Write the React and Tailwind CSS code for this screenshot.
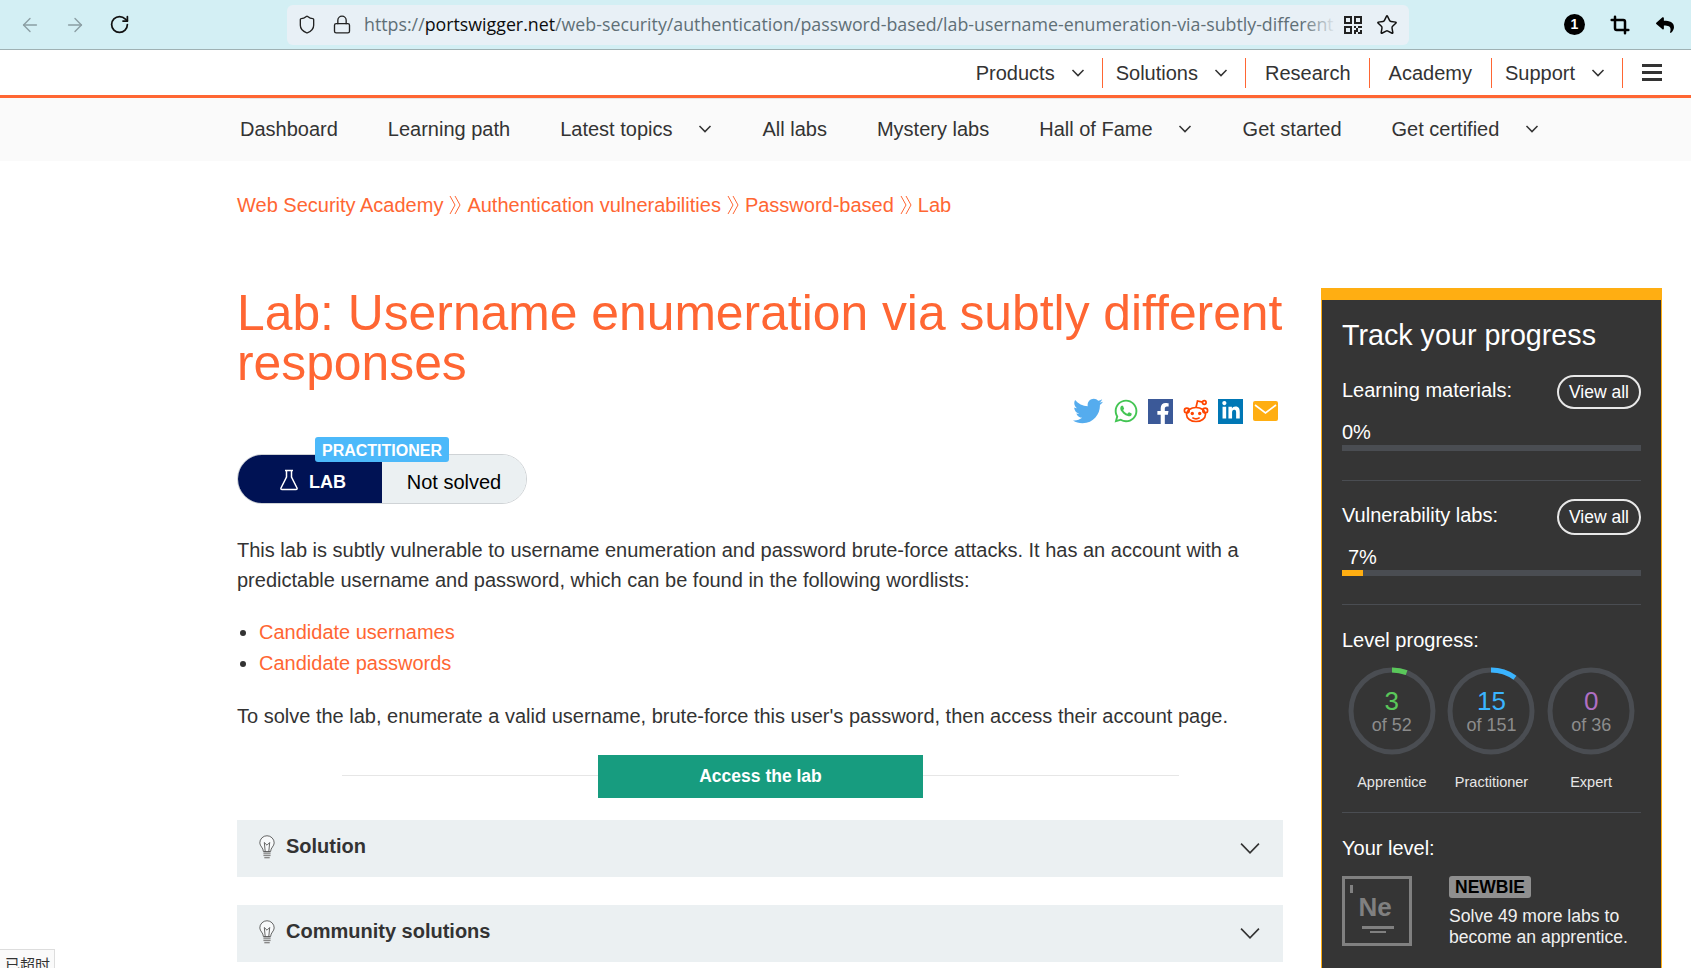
import React from "react";
import { ArrowLeft, ArrowRight, RotateCw, Shield, Lock, Star, Crop } from "lucide-react";
import { FaTwitter, FaWhatsapp, FaFacebookF, FaLinkedinIn, FaReply } from "react-icons/fa";

const Chev = ({ cls = "w-[14px] h-[8px]", sw = "1.5" }) => (
  <svg viewBox="0 0 14 8" className={cls} fill="none" stroke="#333" strokeWidth={sw}><path d="M1.5 1 L7 6.6 L12.5 1" /></svg>
);

const Crumb = () => (
  <svg viewBox="0 0 12 20" className="w-[12px] h-[20px] mx-[6px]" fill="none" stroke="#ff6633" strokeWidth="1"><path d="M1 1 L6 10 L1 19" /><path d="M6 1 L11 10 L6 19" /></svg>
);

const Bulb = () => (
  <svg viewBox="0 0 20 26" className="w-[18px] h-[24px] mr-[10px] mt-[2px]" fill="none" stroke="#444" strokeWidth="0.9">
    <path d="M6 18 C6 14 2 12 2 8.5 A8 8 0 0 1 18 8.5 C18 12 14 14 14 18 Z" fill="#f7f9fa" />
    <path d="M8 18 L7 8 L10 11 L13 8 L12 18" />
    <rect x="6" y="19" width="8" height="1.6" fill="#888" stroke="none" />
    <rect x="6" y="21.5" width="8" height="1.6" fill="#888" stroke="none" />
    <rect x="7" y="24" width="6" height="1.6" fill="#888" stroke="none" />
  </svg>
);

const Ring = ({ n, of, label, color, frac }) => {
  const c = 2 * Math.PI * 41;
  return (
    <div className="flex flex-col items-center">
      <div className="relative w-[88px] h-[88px]">
        <svg viewBox="0 0 88 88" className="w-[88px] h-[88px]">
          <circle cx="44" cy="44" r="41" fill="none" stroke="#4a4d52" strokeWidth="5" />
          <circle cx="44" cy="44" r="41" fill="none" stroke={color} strokeWidth="5" strokeDasharray={`${c * frac} ${c}`} transform="rotate(-90 44 44)" />
        </svg>
        <div className="absolute inset-0 flex flex-col items-center justify-center">
          <div className="text-[26px] leading-[28px] mt-[-1px]" style={{ color }}>{n}</div>
          <div className="text-[18px] leading-[20px] text-[#8c8c8c]">{of}</div>
        </div>
      </div>
      <div className="mt-[17px] text-[14.5px] leading-[20px] text-[#e6e6e6]">{label}</div>
    </div>
  );
};

const ProgressHead = ({ title, h, tm }) => (
  <div className="flex justify-between items-start">
    <div className={`${tm} text-[20px] leading-[30px] text-white`}>{title}</div>
    <div className={`${h} w-[84px] pt-px flex items-center justify-center rounded-full border-2 border-[#e8e8e8] text-[17.5px] text-white`}>View all</div>
  </div>
);

const Accordion = ({ title, cls }) => (
  <div className={`${cls} h-[57px] bg-[#ebf0f2] flex items-center pl-[21px] pr-[20px] pb-[5px]`}>
    <Bulb />
    <div className="text-[20px] font-bold text-[#333]">{title}</div>
    <div className="ml-auto mt-[5px]"><Chev cls="w-[26px] h-[13px]" sw="1" /></div>
  </div>
);

export default function App() {
  return (
    <div className="relative w-[1691px] h-[968px] overflow-hidden bg-white font-['Liberation_Sans',Arial,sans-serif] text-[#333]">
      {/* browser toolbar */}
      <div className="h-[50px] bg-[#d3eff4] border-b border-[#9fb1b3] flex items-center">
        <ArrowLeft className="ml-[19px] w-[22px] h-[22px] text-[#8b9ea3]" strokeWidth={1.5} />
        <ArrowRight className="ml-[23px] w-[22px] h-[22px] text-[#8b9ea3]" strokeWidth={1.5} />
        <RotateCw className="ml-[23px] w-[21px] h-[21px] text-[#111]" strokeWidth={2} />
        <div className="ml-[157px] w-[1122px] h-[40px] rounded-[6px] bg-[#e8f0f6] flex items-center">
          <Shield className="ml-[10px] w-[20px] h-[21px] text-[#222]" strokeWidth={1.6} />
          <Lock className="ml-[15px] w-[20px] h-[21px] text-[#222]" strokeWidth={1.6} />
          <div className="relative ml-[12px] w-[973px] overflow-hidden whitespace-nowrap text-[17.8px] font-['Open_Sans',sans-serif] text-[#5f6f76]">
            https://<span className="text-[#0c0c0d]">portswigger.net</span>/web-security/authentication/password-based/lab-username-enumeration-via-subtly-different
            <div className="absolute right-0 top-0 bottom-0 w-[34px] bg-gradient-to-r from-transparent to-[#e8f0f6]" />
          </div>
          <svg viewBox="0 0 9 9" className="ml-[7px] w-[18px] h-[18px]" shapeRendering="crispEdges" fill="#222">
            <path d="M0 0h4v4H0z M5 0h4v4H5z M0 5h4v4H0z" /><path fill="#e8f0f6" d="M1 1h2v2H1z M6 1h2v2H6z M1 6h2v2H1z" /><path d="M5 5h1v1H5z M7 5h2v1H7z M6 6h1v2H6z M5 7h1v2H5z M8 7h1v2H8z M7 8h1v1H7z" />
          </svg>
          <Star className="ml-[14px] w-[22px] h-[22px] text-[#111]" strokeWidth={1.6} />
        </div>
        <div className="ml-[155px] w-[21px] h-[21px] rounded-full bg-black text-white text-[14px] font-bold flex items-center justify-center">1</div>
        <Crop className="ml-[25px] w-[20px] h-[20px] text-black" strokeWidth={3} />
        <FaReply className="ml-[26px] w-[18px] h-[18px] text-black" />
      </div>

      {/* top nav */}
      <div className="h-[45px] flex items-center justify-end pr-[29px] text-[20px] text-[#333]">
        <div className="h-[30px] flex items-center pr-[17px] border-r border-[#ff6633]">Products<span className="ml-[16px]"><Chev /></span></div>
        <div className="h-[30px] flex items-center pl-[13px] pr-[17px] border-r border-[#ff6633]">Solutions<span className="ml-[16px]"><Chev /></span></div>
        <div className="h-[30px] flex items-center pl-[19px] pr-[18px] border-r border-[#ff6633]">Research</div>
        <div className="h-[30px] flex items-center pl-[19px] pr-[19px] border-r border-[#ff6633]">Academy</div>
        <div className="h-[30px] flex items-center pl-[13px] pr-[17px] border-r border-[#ff6633]">Support<span className="ml-[16px]"><Chev /></span></div>
        <div className="ml-[19px] w-[20px] flex flex-col gap-[4px]">
          <div className="h-[3px] bg-[#333]" /><div className="h-[3px] bg-[#333]" /><div className="h-[3px] bg-[#333]" />
        </div>
      </div>
      <div className="h-[3px] bg-[#ff6633]" />

      {/* second nav */}
      <div className="h-[63px] bg-[#fafafa]">
        <div className="h-px ml-[240px] mr-[31px] bg-[#e6e6e6]" />
        <div className="h-[62px] flex items-center gap-[50px] pl-[240px] text-[20px] text-[#333] pb-[2px]">
          <div>Dashboard</div>
          <div>Learning path</div>
          <div className="flex items-center">Latest topics<span className="ml-[26px]"><Chev /></span></div>
          <div>All labs</div>
          <div>Mystery labs</div>
          <div className="flex items-center mr-px">Hall of Fame<span className="ml-[25px]"><Chev /></span></div>
          <div>Get started</div>
          <div className="flex items-center">Get certified<span className="ml-[26px]"><Chev /></span></div>
        </div>
      </div>

      {/* breadcrumb */}
      <div className="h-[127px] pl-[237px] pt-[30px] flex items-start text-[20px] leading-[28px] text-[#ff6633]">
        <span>Web Security Academy</span><span className="mt-[4px]"><Crumb /></span>
        <span>Authentication vulnerabilities</span><span className="mt-[4px]"><Crumb /></span>
        <span>Password-based</span><span className="mt-[4px]"><Crumb /></span>
        <span>Lab</span>
      </div>

      <div className="flex pl-[237px]">
        {/* main column */}
        <div className="w-[1046px]">
          <h1 className="w-[1060px] text-[49.8px] leading-[50px] text-[#ff6633]">Lab: Username enumeration via subtly different responses</h1>
          <div className="mt-[10px] h-[26px] flex justify-end items-center pr-[5px]">
            <FaTwitter className="w-[32px] h-[30px] text-[#55acee]" />
            <FaWhatsapp className="ml-[9px] w-[26px] h-[26px] text-[#43c553]" />
            <div className="ml-[9px] w-[25px] h-[25px] bg-[#3b5998] flex items-end justify-end overflow-hidden pr-[3px]">
              <FaFacebookF className="w-[14px] h-[21px] text-white" />
            </div>
            <svg viewBox="0 0 26 26" className="ml-[10px] w-[26px] h-[26px]" fill="none" stroke="#ff4500" strokeWidth="1.7">
              <ellipse cx="13" cy="16.5" rx="9.5" ry="7" />
              <circle cx="3.8" cy="12.5" r="2.4" />
              <circle cx="22.2" cy="12.5" r="2.4" />
              <path d="M13 9.5 L14.5 3 L19.5 4.2" />
              <circle cx="21.3" cy="4.5" r="1.8" />
              <circle cx="9.3" cy="15.5" r="1.7" fill="#ff4500" stroke="none" />
              <circle cx="16.7" cy="15.5" r="1.7" fill="#ff4500" stroke="none" />
              <path d="M9.3 19.6 Q13 22.2 16.7 19.6" />
            </svg>
            <div className="ml-[9px] w-[25px] h-[25px] bg-[#0077b5] flex items-center justify-center">
              <FaLinkedinIn className="w-[20px] h-[20px] text-white" />
            </div>
            <svg viewBox="0 0 25 20" className="ml-[10px] w-[25px] h-[20px]">
              <rect width="25" height="20" rx="2" fill="#ffae12" />
              <path d="M2 4 L12.5 12 L23 4" fill="none" stroke="#fff" strokeWidth="1.6" />
            </svg>
          </div>

          <div className="relative mt-[13px] h-[66px] pt-[17px]">
            <div className="absolute left-[78px] top-0 w-[134px] h-[25px] z-10 pt-[2px] rounded-[3px] bg-[#4cb9fa] text-white text-[16px] font-bold flex items-center justify-center">PRACTITIONER</div>
            <div className="flex w-[290px] h-[50px] rounded-full overflow-hidden border border-[#cfd3d6]">
              <div className="w-[144px] bg-[#001254] text-white flex items-center pl-[41px] pt-[6px] text-[18px] font-bold">
                <svg viewBox="0 0 20 22" className="w-[20px] h-[22px] mb-[4px]" fill="none" stroke="#fff" strokeWidth="1.5">
                  <path d="M6 1.5 H14 M7.5 1.5 V8 L2 19 Q1.5 20.5 3 20.5 H17 Q18.5 20.5 18 19 L12.5 8 V1.5" />
                </svg>
                <span className="ml-[10px]">LAB</span>
              </div>
              <div className="flex-1 bg-[#ebf0f2] flex items-center justify-center pt-[6px] text-[20px] text-black">Not solved</div>
            </div>
          </div>

          <p className="mt-[32px] text-[20px] leading-[30px] text-[#333]">This lab is subtly vulnerable to username enumeration and password brute-force attacks. It has an account with a predictable username and password, which can be found in the following wordlists:</p>
          <ul className="mt-[22px] pl-[22px] text-[20px] leading-[31px] text-[#ff6633] list-disc marker:text-[#333]">
            <li>Candidate usernames</li>
            <li>Candidate passwords</li>
          </ul>
          <p className="mt-[22px] text-[20px] leading-[30px] text-[#333]">To solve the lab, enumerate a valid username, brute-force this user's password, then access their account page.</p>

          <div className="mt-[24px] flex items-center ml-[105px] w-[837px]">
            <div className="flex-1 h-px bg-[#e6e6e6] mb-[3px]" />
            <div className="w-[325px] h-[43px] bg-[#179c7f] text-white font-bold text-[17.5px] flex items-center justify-center">Access the lab</div>
            <div className="flex-1 h-px bg-[#e6e6e6] mb-[3px]" />
          </div>

          <Accordion title="Solution" cls="mt-[22px]" />
          <Accordion title="Community solutions" cls="mt-[28px]" />
        </div>

        {/* sidebar */}
        <div className="ml-[38px] w-[341px] h-[700px] bg-[#353535] border-x border-t-[12px] border-[#ffae12] px-[20px] text-white">
          <div className="mt-[18px] text-[28.7px] leading-[34px]">Track your progress</div>
          <div className="mt-[23px]"><ProgressHead title="Learning materials:" h="h-[34px]" tm="" /></div>
          <div className="mt-[11px] text-[20px] leading-[24px]">0%</div>
          <div className="mt-[1px] h-[6px] bg-[#4a4d52]" />
          <div className="mt-[29px] h-px bg-[#4a4d52]" />
          <div className="mt-[18px]"><ProgressHead title="Vulnerability labs:" h="h-[36px]" tm="mt-[1px]" /></div>
          <div className="mt-[10px] pl-[6px] text-[20px] leading-[24px]">7%</div>
          <div className="mt-[1px] h-[6px] bg-[#4a4d52]"><div className="w-[21px] h-[6px] bg-[#ffae12]" /></div>
          <div className="mt-[28px] h-px bg-[#4a4d52]" />
          <div className="mt-[23px] text-[20px] leading-[24px]">Level progress:</div>
          <div className="mt-[15px] grid grid-cols-3">
            <Ring n="3" of="of 52" label="Apprentice" color="#5ac85a" frac={0.058} />
            <Ring n="15" of="of 151" label="Practitioner" color="#3ab4ff" frac={0.099} />
            <Ring n="0" of="of 36" label="Expert" color="#b06fc4" frac={0} />
          </div>
          <div className="mt-[20px] h-px bg-[#4a4d52]" />
          <div className="mt-[23px] text-[20px] leading-[24px]">Your level:</div>
          <div className="mt-[16px] flex">
            <div className="relative shrink-0 w-[70px] h-[70px] border-[3px] border-[#808080] flex flex-col items-center">
              <div className="absolute left-[5px] top-[6px] w-[3px] h-[8px] bg-[#808080]" />
              <div className="mt-[12px] ml-[-4px] h-[32px] text-[26px] leading-[32px] font-bold text-[#808080]">Ne</div>
              <div className="mt-[3px] ml-[1px] w-[32px] h-[3px] bg-[#808080]" />
              <div className="mt-[2px] ml-[1px] w-[16px] h-[2px] bg-[#808080]" />
            </div>
            <div className="ml-[37px]">
              <div className="inline-flex w-[82px] h-[22px] items-center justify-center rounded-[3px] bg-[#8f8f8f] text-black text-[17.5px] font-bold">NEWBIE</div>
              <div className="mt-[6px] text-[17.6px] leading-[21px] text-[#f0f0f0]">Solve 49 more labs to become an apprentice.</div>
            </div>
          </div>
        </div>
      </div>

      <div className="absolute left-0 bottom-0 w-[55px] h-[19px] bg-[#fafafa] border-t border-r border-[#ddd] pl-[5px] pt-[5px] text-[15px] leading-[18px] overflow-hidden text-[#333] font-['Noto_Sans_CJK_SC',sans-serif]">已超时</div>
    </div>
  );
}
